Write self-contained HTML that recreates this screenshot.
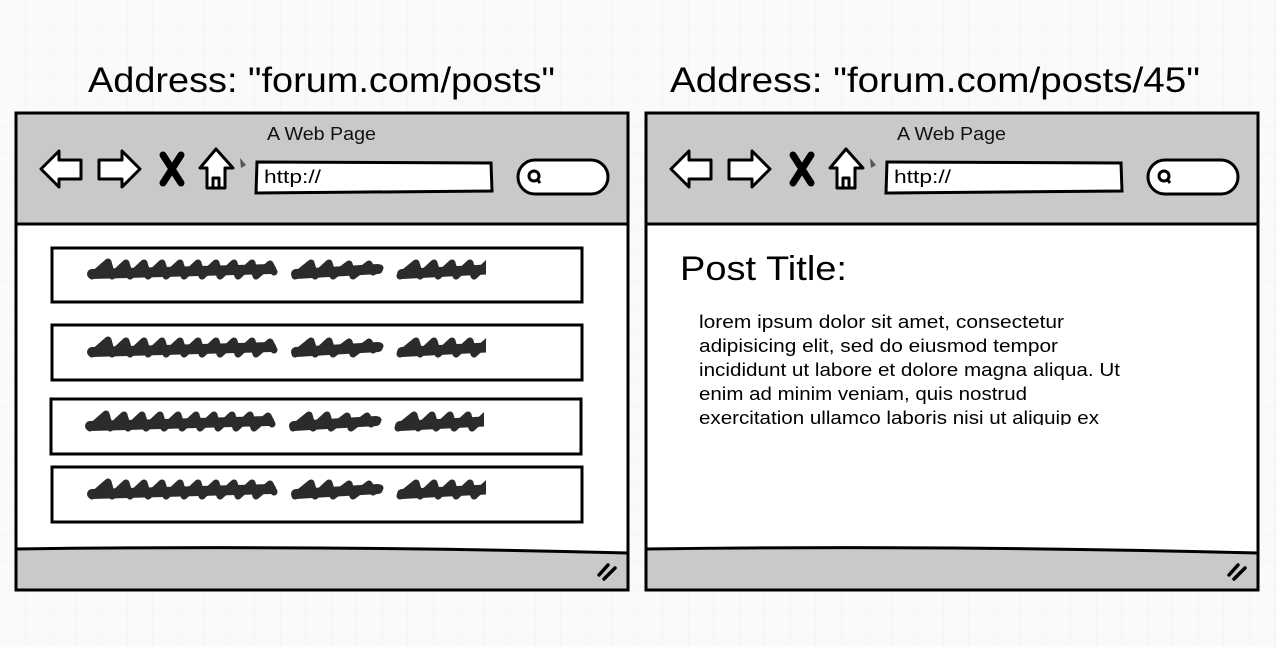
<!DOCTYPE html>
<html><head><meta charset="utf-8"><style>
html,body{margin:0;padding:0;width:1277px;height:647px;overflow:hidden;background:#fafafa}
svg{display:block}
text{font-family:"Liberation Sans",sans-serif}
</style></head><body>
<svg width="1277" height="647" viewBox="0 0 1277 647" xmlns="http://www.w3.org/2000/svg">
<defs>
<pattern id="g" width="25.5" height="25.5" patternUnits="userSpaceOnUse">
<path d="M25.5 0V25.5M0 25.5H25.5" stroke="#f0f0f0" stroke-width="1" fill="none"/>
</pattern>
<clipPath id="sq"><rect x="60" y="0" width="410" height="60"/></clipPath>
<g id="scrib" clip-path="url(#sq)">
<g fill="none" stroke="#2b2b2b" stroke-linecap="round" stroke-linejoin="round">
<path d="M76 36 L255 31" stroke-width="10"/>
<path d="M76 38 L92 24 L96 38 L110 25 L114 38 L128 25 L132 38 L146 25 L150 38 L164 25 L168 38 L182 25 L186 38 L200 25 L204 38 L218 25 L222 38 L236 25 L240 38 L254 26 L258 34" stroke-width="7"/>
<path d="M280 36 L362 31" stroke-width="10"/>
<path d="M279 38 L295 25 L299 38 L313 25 L317 38 L333 26 L337 38 L353 26 L357 34 L364 30" stroke-width="7"/>
<path d="M386 36 L480 31" stroke-width="10"/>
<path d="M384 38 L400 25 L404 38 L418 25 L422 38 L436 25 L440 38 L454 25 L458 38 L472 25 L476 38" stroke-width="7"/>
</g>
</g>
<g id="browser">
<rect x="0" y="0" width="612" height="477" fill="#fff"/>
<rect x="0" y="0" width="612" height="111" fill="#c9c9c9"/>
<path d="M0 436 Q300 432 612 440 L612 477 L0 477Z" fill="#c9c9c9"/>
<path d="M0 111 L612 111" stroke="#000" stroke-width="3"/>
<path d="M0 436 Q300 432 612 440" stroke="#000" stroke-width="3" fill="none"/>
<rect x="0" y="0" width="612" height="477" fill="none" stroke="#000" stroke-width="3"/>
<text x="251" y="27" font-size="18" textLength="109" lengthAdjust="spacingAndGlyphs" fill="#111">A Web Page</text>
<g fill="#fff" stroke="#000" stroke-width="3" stroke-linejoin="round">
<path d="M25 56 L43 38 L43 47 L65 47 L65 66 L43 66 L43 74Z"/>
<path d="M124 56 L106 38 L106 47 L83 47 L83 66 L106 66 L106 74Z"/>
<path d="M200 36 L184 55 L191 55 L191 75 L209 75 L209 55 L217 55Z"/>
<path d="M197 75 L197 65 L203 65 L203 75" fill="none"/>
</g>
<path d="M147 42 L165 70 M165 42 L147 70" stroke="#000" stroke-width="7" stroke-linecap="round"/>
<path d="M224 45 L230 52 L225 55Z" fill="#555"/>
<path d="M241 49 L475 50 L476 78 L240 80Z" fill="#fff" stroke="#000" stroke-width="3"/>
<text x="248" y="70" font-size="18" textLength="57" lengthAdjust="spacingAndGlyphs" fill="#000">http://</text>
<rect x="502" y="47" width="90" height="34" rx="17" fill="#fff" stroke="#000" stroke-width="3"/>
<circle cx="518" cy="63" r="5" fill="none" stroke="#000" stroke-width="3"/>
<path d="M521 66 L524 70" stroke="#000" stroke-width="3"/>
<path d="M583 462 L592 452 M588 466 L599 455" stroke="#000" stroke-width="3.5" stroke-linecap="round"/>
</g>
</defs>
<rect width="1277" height="647" fill="url(#g)"/>
<text x="88" y="92" font-size="35" textLength="467" lengthAdjust="spacingAndGlyphs" fill="#000">Address: "forum.com/posts"</text>
<text x="670" y="92" font-size="35" textLength="530" lengthAdjust="spacingAndGlyphs" fill="#000">Address: "forum.com/posts/45"</text>
<use href="#browser" x="16" y="113"/>
<use href="#browser" x="646" y="113"/>
<g fill="#fff" stroke="#000" stroke-width="3">
<rect x="52" y="248" width="530" height="54"/>
<rect x="52" y="325" width="530" height="55"/>
<rect x="51" y="399" width="530" height="55"/>
<rect x="52" y="467" width="530" height="55"/>
</g>
<use href="#scrib" x="16" y="238"/>
<use href="#scrib" x="16" y="316"/>
<use href="#scrib" x="14" y="390"/>
<use href="#scrib" x="16" y="458"/>
<text x="680" y="280" font-size="34" textLength="167" lengthAdjust="spacingAndGlyphs" fill="#000">Post Title:</text>
<g font-size="18" fill="#000">
<text x="699" y="328" textLength="365" lengthAdjust="spacingAndGlyphs">lorem ipsum dolor sit amet, consectetur</text>
<text x="699" y="352" textLength="359" lengthAdjust="spacingAndGlyphs">adipisicing elit, sed do eiusmod tempor</text>
<text x="699" y="376" textLength="421" lengthAdjust="spacingAndGlyphs">incididunt ut labore et dolore magna aliqua. Ut</text>
<text x="699" y="400" textLength="328" lengthAdjust="spacingAndGlyphs">enim ad minim veniam, quis nostrud</text>
</g>
<clipPath id="cl"><rect x="690" y="400" width="500" height="25"/></clipPath>
<text x="699" y="424" font-size="18" textLength="400" lengthAdjust="spacingAndGlyphs" fill="#000" clip-path="url(#cl)">exercitation ullamco laboris nisi ut aliquip ex</text>
</svg>
</body></html>
